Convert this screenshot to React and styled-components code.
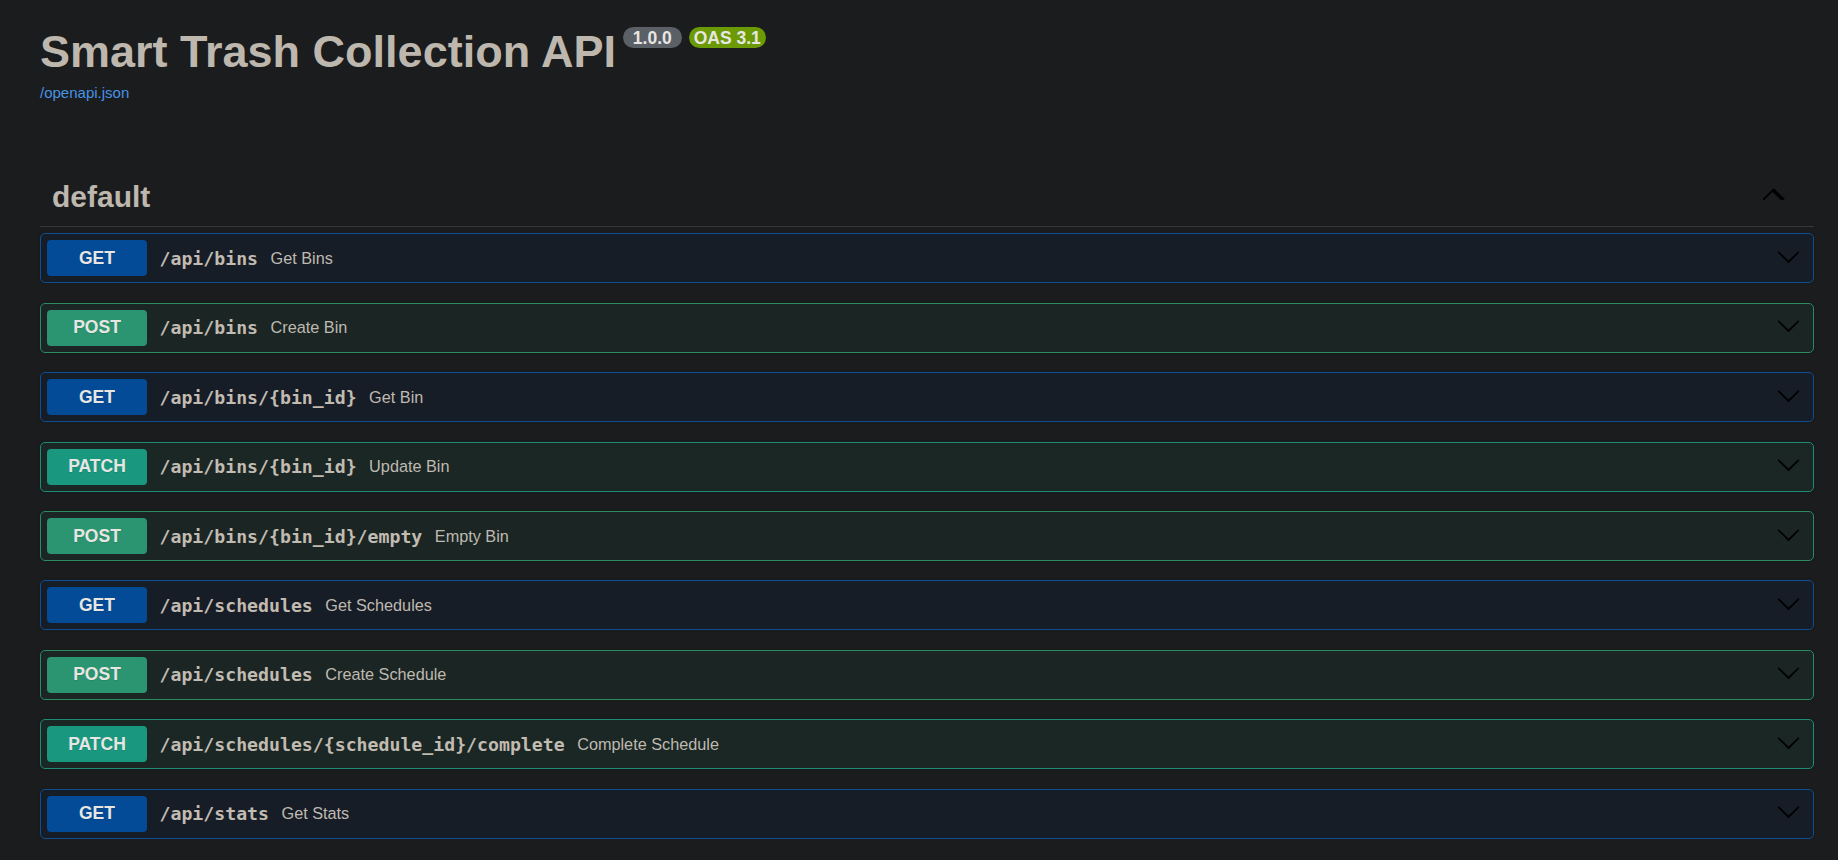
import React from "react";
import styled, { createGlobalStyle } from "styled-components";

const GlobalStyle = createGlobalStyle`
  html, body {
    margin: 0;
    padding: 0;
    background: #1b1c1e;
  }
  body {
    font-family: "Liberation Sans", Arial, sans-serif;
    color: #bdb7ae;
  }
  * { box-sizing: border-box; }
`;

const METHOD_COLORS = {
  GET: { badge: "#034b96", border: "#0e4f94", bg: "#171d27" },
  POST: { badge: "#2b9470", border: "#2a8a60", bg: "#1b2624" },
  PATCH: { badge: "#1a977f", border: "#1d8c75", bg: "#1b2725" },
};

const operations = [
  { method: "GET", path: "/api/bins", summary: "Get Bins" },
  { method: "POST", path: "/api/bins", summary: "Create Bin" },
  { method: "GET", path: "/api/bins/{bin_id}", summary: "Get Bin" },
  { method: "PATCH", path: "/api/bins/{bin_id}", summary: "Update Bin" },
  { method: "POST", path: "/api/bins/{bin_id}/empty", summary: "Empty Bin" },
  { method: "GET", path: "/api/schedules", summary: "Get Schedules" },
  { method: "POST", path: "/api/schedules", summary: "Create Schedule" },
  {
    method: "PATCH",
    path: "/api/schedules/{schedule_id}/complete",
    summary: "Complete Schedule",
  },
  { method: "GET", path: "/api/stats", summary: "Get Stats" },
];

const Wrapper = styled.div`
  padding: 0 24px 0 40px;
`;

const Info = styled.section`
  padding-top: 26px;
`;

const Title = styled.h2`
  display: flex;
  align-items: flex-start;
  margin: 0;
  font-family: "Liberation Sans", Arial, sans-serif;
  font-weight: 700;
  font-size: 45px;
  line-height: 52px;
  color: #bdb7ae;
`;

const Badges = styled.span`
  display: flex;
  gap: 7px;
  margin-left: 7px;
  margin-top: 1px;
`;

const VersionBadge = styled.small`
  display: inline-block;
  background: ${(p) => (p.$stamp ? "#6b9a05" : "#5a6066")};
  border-radius: 57px;
  padding: 2.5px 5px;
  font-family: "Liberation Sans", Arial, sans-serif;
  font-size: 17.5px;
  font-weight: 700;
  line-height: 16px;
  color: #e8e6e3;
  white-space: pre;
`;

const InfoLink = styled.a`
  display: block;
  margin-top: 6px;
  font-family: "Liberation Sans", Arial, sans-serif;
  font-size: 15px;
  line-height: 17px;
  color: #4793e4;
  text-decoration: none;
`;

const TagSection = styled.section`
  margin-top: 66px;
`;

const TagHeader = styled.div`
  display: flex;
  align-items: center;
  padding: 12px 29px 12px 12px;
  border-bottom: 1px solid #35383b;
  margin-bottom: 6.3px;
`;

const TagName = styled.h3`
  flex: 1;
  margin: 0;
  font-family: "Liberation Sans", Arial, sans-serif;
  font-weight: 700;
  font-size: 30px;
  line-height: 35px;
  color: #bdb7ae;
`;

const Arrow = styled.svg`
  width: 25px;
  height: 25px;
  flex: none;
  fill: #000;
  margin-bottom: ${(p) => (p.$up ? "6px" : "4px")};
`;

const OpList = styled.div`
  display: flex;
  flex-direction: column;
  gap: 19.45px;
`;

const OpBlock = styled.div`
  display: flex;
  align-items: center;
  height: 50px;
  padding: 0 6px;
  border: 1px solid ${(p) => METHOD_COLORS[p.$method].border};
  background: ${(p) => METHOD_COLORS[p.$method].bg};
  border-radius: 5px;
  box-shadow: 0 0 3px rgba(0, 0, 0, 0.19);
`;

const MethodBadge = styled.span`
  flex: none;
  width: 100px;
  height: 36px;
  display: flex;
  align-items: center;
  justify-content: center;
  border-radius: 4px;
  background: ${(p) => METHOD_COLORS[p.$method].badge};
  font-family: "Liberation Sans", Arial, sans-serif;
  font-weight: 700;
  font-size: 17.5px;
  color: #e8e6e3;
  text-shadow: 0 1px 0 rgba(0, 0, 0, 0.1);
`;

const Path = styled.span`
  flex: none;
  padding: 0 12.5px;
  font-family: "DejaVu Sans Mono", "Liberation Mono", monospace;
  font-weight: 700;
  font-size: 18.2px;
  color: #c1bbb1;
  white-space: nowrap;
`;

const Description = styled.span`
  flex: 1;
  font-family: "Liberation Sans", Arial, sans-serif;
  font-size: 16.25px;
  color: #bfb9b0;
  white-space: nowrap;
`;

const ArrowButton = styled.span`
  display: flex;
  align-items: center;
  padding: 0 6px;
`;

const ArrowUp = () => (
  <Arrow $up viewBox="0 0 20 20" aria-hidden="true">
    <path d="M17.418 14.908c-.272.268-.709.268-.979 0L10 8.726l-6.418 6.182c-.27.268-.707.268-.979 0s-.271-.701 0-.969l7.908-7.83c.27-.268.707-.268.979 0l7.908 7.83c.27.268.27.701 0 .969z" />
  </Arrow>
);

const ArrowDown = () => (
  <Arrow viewBox="0 0 20 20" aria-hidden="true">
    <path d="M17.418 6.109c.272-.268.709-.268.979 0s.271.701 0 .969l-7.908 7.83c-.27.268-.707.268-.979 0l-7.908-7.83c-.27-.268-.27-.701 0-.969.271-.268.709-.268.979 0L10 13.25l7.418-7.141z" />
  </Arrow>
);

export default function App() {
  return (
    <>
      <GlobalStyle />
      <Wrapper>
        <Info>
          <Title>
            Smart Trash Collection API
            <Badges>
              <VersionBadge>{" 1.0.0 "}</VersionBadge>
              <VersionBadge $stamp>OAS 3.1</VersionBadge>
            </Badges>
          </Title>
          <InfoLink href="#">/openapi.json</InfoLink>
        </Info>
        <TagSection>
          <TagHeader>
            <TagName>default</TagName>
            <ArrowUp />
          </TagHeader>
          <OpList>
            {operations.map((op, i) => (
              <OpBlock key={i} $method={op.method}>
                <MethodBadge $method={op.method}>{op.method}</MethodBadge>
                <Path>{op.path}</Path>
                <Description>{op.summary}</Description>
                <ArrowButton>
                  <ArrowDown />
                </ArrowButton>
              </OpBlock>
            ))}
          </OpList>
        </TagSection>
      </Wrapper>
    </>
  );
}
